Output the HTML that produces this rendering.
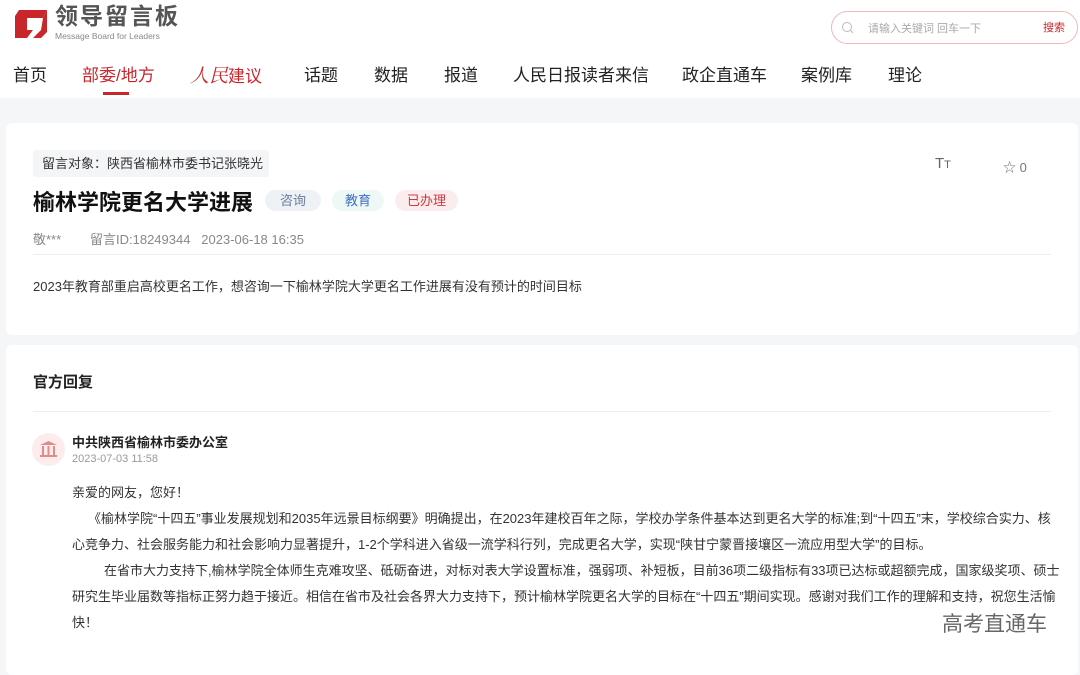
<!DOCTYPE html>
<html><head><meta charset="utf-8"><style>
*{margin:0;padding:0;box-sizing:border-box}
body{width:1080px;height:662px;overflow:hidden;background:#f5f6f8;font-family:"Liberation Sans","Noto Sans CJK SC",sans-serif;color:#222;position:relative}
.hdr{position:absolute;left:0;top:0;width:1080px;height:98px;background:#fff}
.abs{position:absolute;white-space:nowrap}
.nav{top:61px;font-size:17px;color:#222}
.card{position:absolute;left:6px;width:1072px;background:#fff;border-radius:6px}
.tag{position:absolute;top:190px;height:21px;line-height:21px;font-size:13px;border-radius:11px;text-align:center}
.p{position:absolute;left:72px;width:990px;font-size:13px;line-height:26px;color:#333}
</style></head><body>
<div class="hdr">
<svg class="abs" style="left:13px;top:8px" width="36" height="32" viewBox="0 0 36 32"><path d="M6 2h28l-4 8H14v12h6l-6 8H2V8z" fill="#c9262c"/><path d="M14 10h16v12H20z" fill="#fff"/><path d="M30 10l4-8v22l-6 6h-8l8-8z" fill="#c9262c"/></svg>
<div class="abs" style="left:55px;top:2px;font-size:23px;font-weight:bold;color:#555;letter-spacing:2px;line-height:28px">领导留言板</div>
<div class="abs" style="left:55px;top:31px;font-size:8.5px;color:#888;line-height:10px">Message Board for Leaders</div>
<div class="abs" style="left:831px;top:11px;width:247px;height:33px;border:1px solid #f0b7b9;border-radius:17px"></div>
<svg class="abs" style="left:841px;top:21px" width="13" height="13" viewBox="0 0 13 13"><circle cx="6" cy="6" r="4.5" fill="none" stroke="#bbb" stroke-width="1"/><path d="M9.5 9.5l2.5 2.5" stroke="#bbb"/></svg>
<div class="abs" style="left:868px;top:20px;font-size:11px;color:#aaa">请输入关键词 回车一下</div>
<div class="abs" style="left:1043px;top:19px;font-size:11px;color:#c9262c">搜索</div>
<div class="abs nav" style="left:13px">首页</div>
<div class="abs nav" style="left:82px;color:#c9262c">部委/地方</div>
<div class="abs" style="left:103px;top:92px;width:26px;height:3px;background:#c9262c"></div>
<div class="abs nav" style="left:190px;color:#c9262c;top:61px"><span style="font-family:'Noto Serif CJK SC',serif;font-style:italic;font-size:19px">人民</span>建议</div>
<div class="abs nav" style="left:304px">话题</div>
<div class="abs nav" style="left:374px">数据</div>
<div class="abs nav" style="left:444px">报道</div>
<div class="abs nav" style="left:513px">人民日报读者来信</div>
<div class="abs nav" style="left:682px">政企直通车</div>
<div class="abs nav" style="left:801px">案例库</div>
<div class="abs nav" style="left:888px">理论</div>
</div>
<div class="card" style="top:123px;height:212px"></div>
<div class="abs" style="left:33px;top:150px;width:236px;height:27px;background:#f4f5f7;border-radius:3px;font-size:13px;line-height:27px;padding-left:9px;color:#333">留言对象：陕西省榆林市委书记张晓光</div>
<div class="abs" style="left:935px;top:155px;font-size:15px;color:#666">T<span style="font-size:11px">T</span></div>
<div class="abs" style="left:1003px;top:157px;font-size:13px;color:#777">☆ 0</div>
<div class="abs" style="left:33px;top:185px;font-size:22px;font-weight:bold;color:#111">榆林学院更名大学进展</div>
<div class="tag" style="left:265px;width:56px;background:#eef2f7;color:#6a7d99">咨询</div>
<div class="tag" style="left:332px;width:52px;background:#eef8f4;color:#3f6fc4">教育</div>
<div class="tag" style="left:395px;width:63px;background:#fbeced;color:#d0383e">已办理</div>
<div class="abs" style="left:33px;top:229px;font-size:13px;color:#888">敬***</div>
<div class="abs" style="left:90px;top:229px;font-size:13px;color:#888">留言ID:18249344&nbsp;&nbsp;&nbsp;2023-06-18 16:35</div>
<div class="abs" style="left:33px;top:254px;width:1018px;height:1px;background:#eee"></div>
<div class="abs" style="left:33px;top:276px;font-size:13px;color:#333">2023年教育部重启高校更名工作，想咨询一下榆林学院大学更名工作进展有没有预计的时间目标</div>
<div class="card" style="top:345px;height:330px"></div>
<div class="abs" style="left:33px;top:371px;font-size:15px;font-weight:bold;color:#222">官方回复</div>
<div class="abs" style="left:33px;top:411px;width:1018px;height:1px;background:#eee"></div>
<div class="abs" style="left:32px;top:433px;width:33px;height:33px;border-radius:50%;background:#fcecec"></div>
<svg class="abs" style="left:39px;top:440px" width="19" height="18" viewBox="0 0 19 18"><path d="M1 5L9.5 1 18 5z" fill="#e38a8d"/><rect x="1" y="15" width="17" height="2" fill="#e38a8d"/><rect x="3" y="6" width="2" height="9" fill="#e38a8d"/><rect x="8.5" y="6" width="2" height="9" fill="#e38a8d"/><rect x="14" y="6" width="2" height="9" fill="#e38a8d"/></svg>
<div class="abs" style="left:72px;top:432px;font-size:13px;font-weight:bold;color:#222">中共陕西省榆林市委办公室</div>
<div class="abs" style="left:72px;top:453px;font-size:11px;color:#999">2023-07-03 11:58</div>
<div class="p" style="top:480px">亲爱的网友，您好！</div>
<div class="p" style="top:506px;text-indent:16px;width:985px">《榆林学院“十四五”事业发展规划和2035年远景目标纲要》明确提出，在2023年建校百年之际，学校办学条件基本达到更名大学的标准;到“十四五”末，学校综合实力、核心竞争力、社会服务能力和社会影响力显著提升，1-2个学科进入省级一流学科行列，完成更名大学，实现“陕甘宁蒙晋接壤区一流应用型大学”的目标。</div>
<div class="p" style="top:558px;white-space:nowrap;width:1000px"><span style="padding-left:32px"></span>在省市大力支持下,榆林学院全体师生克难攻坚、砥砺奋进，对标对表大学设置标准，强弱项、补短板，目前36项二级指标有33项已达标或超额完成，国家级奖项、硕士<br>研究生毕业届数等指标正努力趋于接近。相信在省市及社会各界大力支持下，预计榆林学院更名大学的目标在“十四五”期间实现。感谢对我们工作的理解和支持，祝您生活愉<br>快！</div>
<div class="abs" style="left:942px;top:608px;font-size:21px;color:#666;background:rgba(255,255,255,.6)">高考直通车</div>
</body></html>
